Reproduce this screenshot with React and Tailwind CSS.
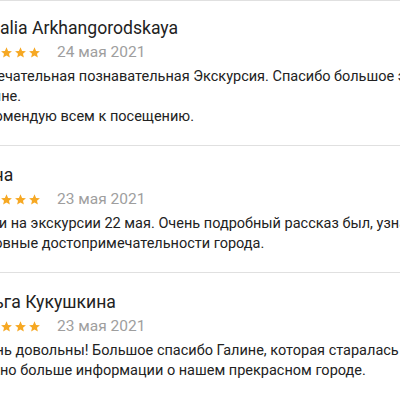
import React from "react";

const reviews = [
  {
    name: "Natalia Arkhangorodskaya",
    date: "24 мая 2021",
    lines: [
      "Замечательная познавательная Экскурсия. Спасибо большое экскурсоводу",
      "Галине.",
      "Рекомендую всем к посещению.",
    ],
  },
  {
    name: "Анна",
    date: "23 мая 2021",
    lines: [
      "Были на экскурсии 22 мая. Очень подробный рассказ был, узнали много нового,",
      "основные достопримечательности города.",
    ],
  },
  {
    name: "Ольга Кукушкина",
    date: "23 мая 2021",
    lines: [
      "Очень довольны! Большое спасибо Галине, которая старалась дать нам",
      "можно больше информации о нашем прекрасном городе.",
    ],
  },
];

const pads = ["pt-[15px] pb-[18px]", "pt-[17px] pb-[18px]", "pt-[17px] pb-[16px]"];

function Star() {
  return (
    <svg width="13" height="13" viewBox="0 0 24 24" className="shrink-0">
      <path
        fill="#f6a823"
        d="M12 2.5l2.9 6.6 7.1.6-5.4 4.7 1.6 7-6.2-3.7-6.2 3.7 1.6-7L2 9.7l7.1-.6z"
      />
    </svg>
  );
}

export default function App() {
  return (
    <div className="w-[400px] h-[400px] overflow-hidden bg-white font-['Roboto',sans-serif]">
      <div className="ml-[-28px] w-[480px]">
        {reviews.map((r, i) => (
          <div key={i} className={`border-t border-[#e0e0e0] ${pads[i]}`}>
            <div className="text-[17.6px] leading-[24px] text-[#222222] whitespace-nowrap">{r.name}</div>
            <div className="flex items-center h-[24px]">
              <div className="flex gap-[1px]">
                <Star />
                <Star />
                <Star />
                <Star />
                <Star />
              </div>
              <div className="ml-[16px] text-[15.5px] leading-[24px] text-[#9e9e9e] whitespace-nowrap">{r.date}</div>
            </div>
            <div className="mt-[3px] ml-[-2px] text-[14.5px] leading-[20px] text-[#222222]">
              {r.lines.map((l, j) => (
                <div key={j} className="whitespace-nowrap">{l}</div>
              ))}
            </div>
          </div>
        ))}
      </div>
    </div>
  );
}
